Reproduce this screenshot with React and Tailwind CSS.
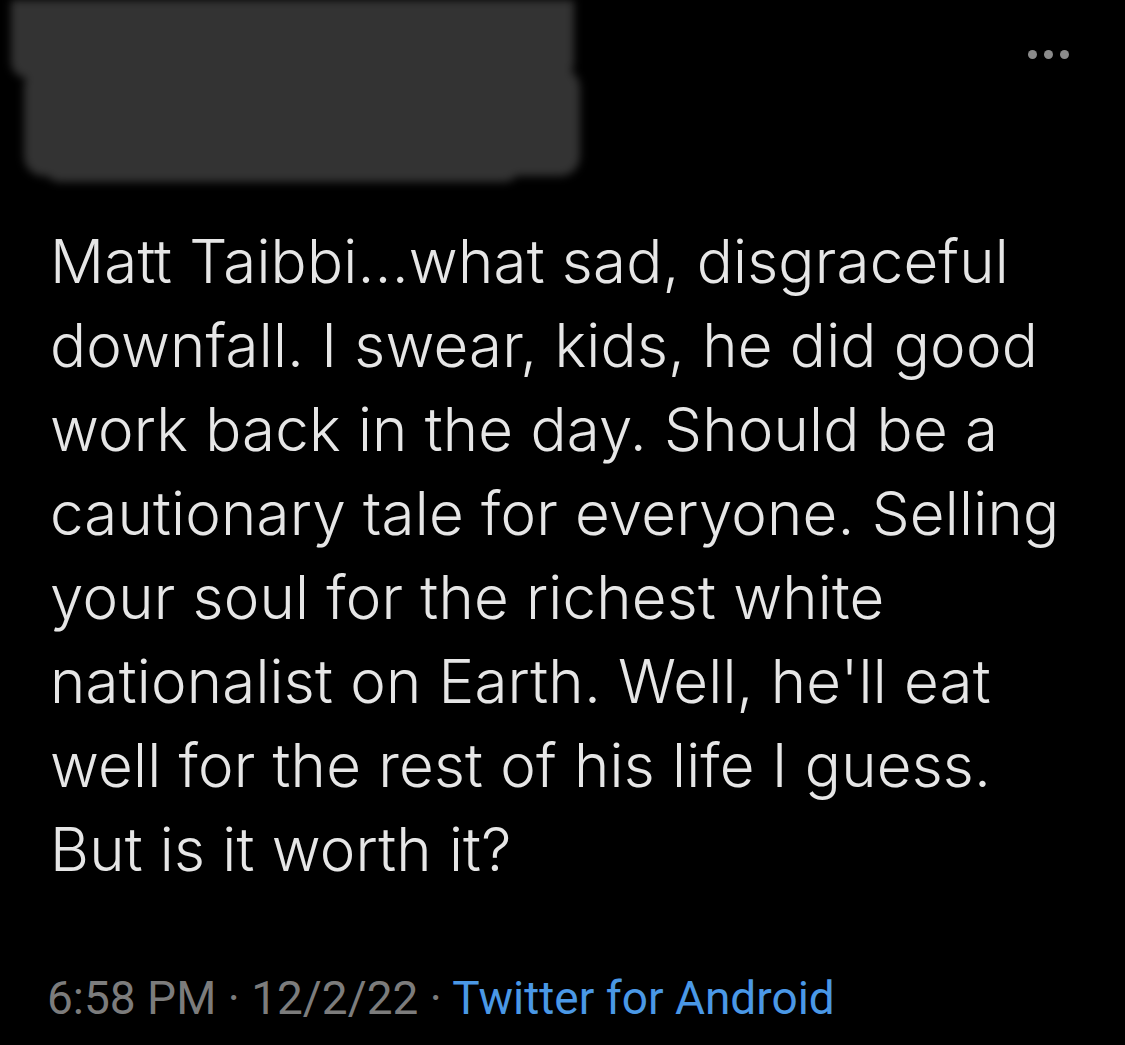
import React from 'react';

const lines = [
  'Matt Taibbi...what sad, disgraceful',
  'downfall. I swear, kids, he did good',
  'work back in the day. Should be a',
  'cautionary tale for everyone. Selling',
  'your soul for the richest white',
  "nationalist on Earth. Well, he'll eat",
  'well for the rest of his life I guess.',
  'But is it worth it?',
];

const App = () => {
  return (
    <div className="w-[1125px] h-[1045px] bg-black overflow-hidden flex flex-col">
      {/* header: redacted name + menu */}
      <div className="flex justify-between h-[200px]">
        <div className="blur-[4px]">
          <div className="ml-[11px] w-[563px] h-[78px] bg-[#333333] rounded-b-[16px]" />
          <div className="ml-[24px] -mt-[10px] w-[556px] h-[108px] bg-[#333333] rounded-[20px]" />
          <div className="ml-[44px] -mt-[26px] w-[476px] h-[32px] bg-[#333333] rounded-b-[16px]" />
        </div>
        <div className="flex gap-[7px] pt-[50px] pr-[56px]">
          <span className="w-[9px] h-[9px] rounded-full bg-[#8b8b8b]" />
          <span className="w-[9px] h-[9px] rounded-full bg-[#8b8b8b]" />
          <span className="w-[9px] h-[9px] rounded-full bg-[#8b8b8b]" />
        </div>
      </div>

      <div className="mt-[19px] pl-[50px] text-[#e6e6e6] text-[60px] leading-[84px] font-light tracking-[0.2px] font-['Inter','Liberation_Sans',sans-serif]">
        {lines.map((line, i) => (
          <div key={i} className="whitespace-nowrap">{line}</div>
        ))}
      </div>

      <div className="mt-[73px] pl-[47px] text-[46px] font-['Roboto','Liberation_Sans',sans-serif] text-[#7c7c7c]">
        6:58 PM · 12/2/22 · <span className="text-[#4a98e6]">Twitter for Android</span>
      </div>
    </div>
  );
};

export default App;
